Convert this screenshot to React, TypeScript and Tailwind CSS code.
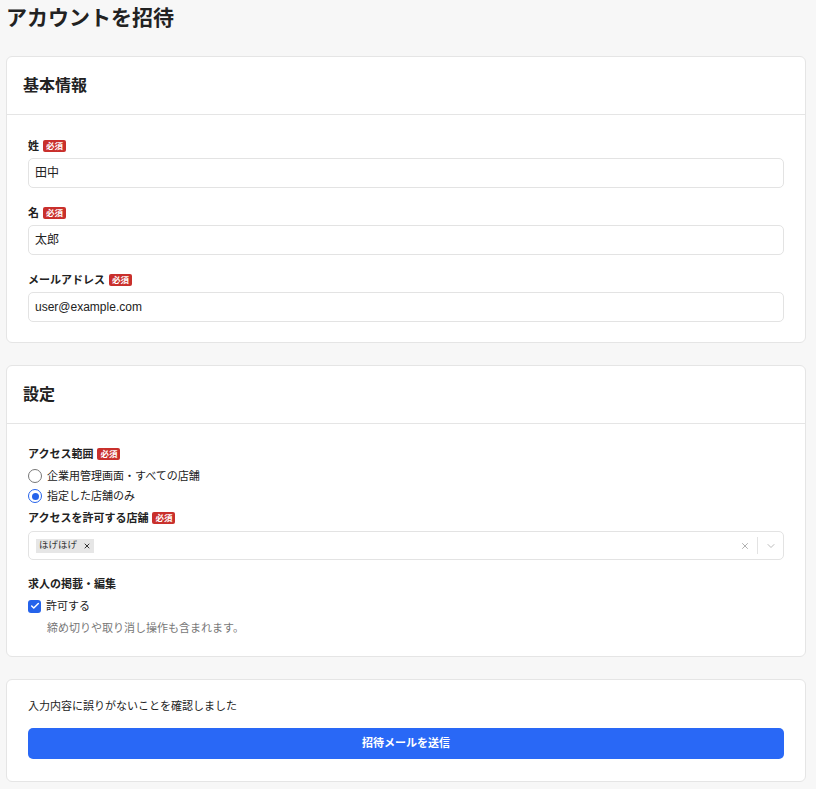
import { Check, ChevronDown, X } from 'lucide-react';

function Required() {
  return (
    <span className="ml-[4px] inline-flex h-[12px] items-center rounded-[2px] bg-[#c9302c] px-[3px] text-[8.5px] font-bold leading-none text-white">
      必須
    </span>
  );
}

function FieldLabel({ text, required }: { text: string; required?: boolean }) {
  return (
    <div className="flex h-[14px] items-center text-[11px] font-bold text-[#222]">
      {text}
      {required && <Required />}
    </div>
  );
}

function TextField({ label, value }: { label: string; value: string }) {
  return (
    <div>
      <FieldLabel text={label} required />
      <div className="mt-[5px] flex h-[30px] items-center rounded-[5px] border border-[#e3e3e3] bg-white px-[6px] text-[12px] text-[#222]">
        {value}
      </div>
    </div>
  );
}

function Card({ title, children }: { title: string; children: React.ReactNode }) {
  return (
    <section className="rounded-[6px] border border-[#e5e5e5] bg-white">
      <div className="flex h-[58px] items-center border-b border-[#e5e5e5] px-[16px]">
        <h2 className="text-[16px] font-bold text-[#222]">{title}</h2>
      </div>
      {children}
    </section>
  );
}

function Radio({ label, checked }: { label: string; checked?: boolean }) {
  return (
    <label className="flex h-[20px] items-center gap-[5px] text-[11px] text-[#222]">
      <span
        className={
          checked
            ? 'flex h-[14px] w-[14px] items-center justify-center rounded-full border-[1.5px] border-[#2563eb]'
            : 'h-[14px] w-[14px] rounded-full border-[1.5px] border-[#777]'
        }
      >
        {checked && <span className="h-[7px] w-[7px] rounded-full bg-[#2563eb]" />}
      </span>
      {label}
    </label>
  );
}

export default function App() {
  return (
    <div
      className="min-h-[789px] bg-[#f7f7f7] pl-[6px] pr-[10px] pb-[7px]"
      style={{ fontFamily: '"Liberation Sans", "Noto Sans CJK JP", sans-serif' }}
    >
      <h1 className="pt-[4px] text-[21px] font-bold leading-[28px] text-[#222]">アカウントを招待</h1>

      <div className="mt-[24px] flex flex-col gap-[22px]">
        <Card title="基本情報">
          <div className="flex flex-col gap-[18px] px-[21px] pt-[24px] pb-[20px]">
            <TextField label="姓" value="田中" />
            <TextField label="名" value="太郎" />
            <TextField label="メールアドレス" value="user@example.com" />
          </div>
        </Card>

        <Card title="設定">
          <div className="px-[21px] pt-[23px] pb-[21px]">
            <FieldLabel text="アクセス範囲" required />
            <div className="mt-[5px]">
              <Radio label="企業用管理画面・すべての店舗" />
              <Radio label="指定した店舗のみ" checked />
            </div>
            <div className="mt-[5px]">
              <FieldLabel text="アクセスを許可する店舗" required />
            </div>
            <div className="mt-[6px] flex h-[29px] items-center rounded-[5px] border border-[#e3e3e3] bg-white pl-[7px]">
              <span className="flex h-[14px] items-center gap-[6px] bg-[#e6e6e6] px-[3px] text-[9.5px] text-[#333]">
                ほげほげ
                <X size={8} strokeWidth={3} className="text-[#333]" />
              </span>
              <div className="ml-auto flex h-full items-center">
                <X size={10} strokeWidth={2.2} className="text-[#aaa]" />
                <span className="mx-[7px] h-[17px] w-px bg-[#e3e3e3]" />
                <ChevronDown size={12} strokeWidth={1.6} className="mr-[6px] text-[#aaa]" />
              </div>
            </div>

            <div className="mt-[17px]">
              <FieldLabel text="求人の掲載・編集" />
            </div>
            <label className="mt-[5px] flex h-[20px] items-center gap-[5px] text-[11px] text-[#222]">
              <span className="flex h-[13px] w-[13px] items-center justify-center rounded-[3px] bg-[#2563eb]">
                <Check size={10} strokeWidth={3.5} className="text-white" />
              </span>
              許可する
            </label>
            <p className="mt-[5px] pl-[19px] text-[11px] leading-[14px] text-[#777]">
              締め切りや取り消し操作も含まれます。
            </p>
          </div>
        </Card>

        <section className="rounded-[6px] border border-[#e5e5e5] bg-white px-[21px] pt-[19px] pb-[22px]">
          <p className="text-[11px] leading-[14px] text-[#222]">入力内容に誤りがないことを確認しました</p>
          <button className="mt-[15px] flex h-[31px] w-full items-center justify-center rounded-[5px] bg-[#2968f6] text-[11px] font-bold text-white">
            招待メールを送信
          </button>
        </section>
      </div>
    </div>
  );
}
